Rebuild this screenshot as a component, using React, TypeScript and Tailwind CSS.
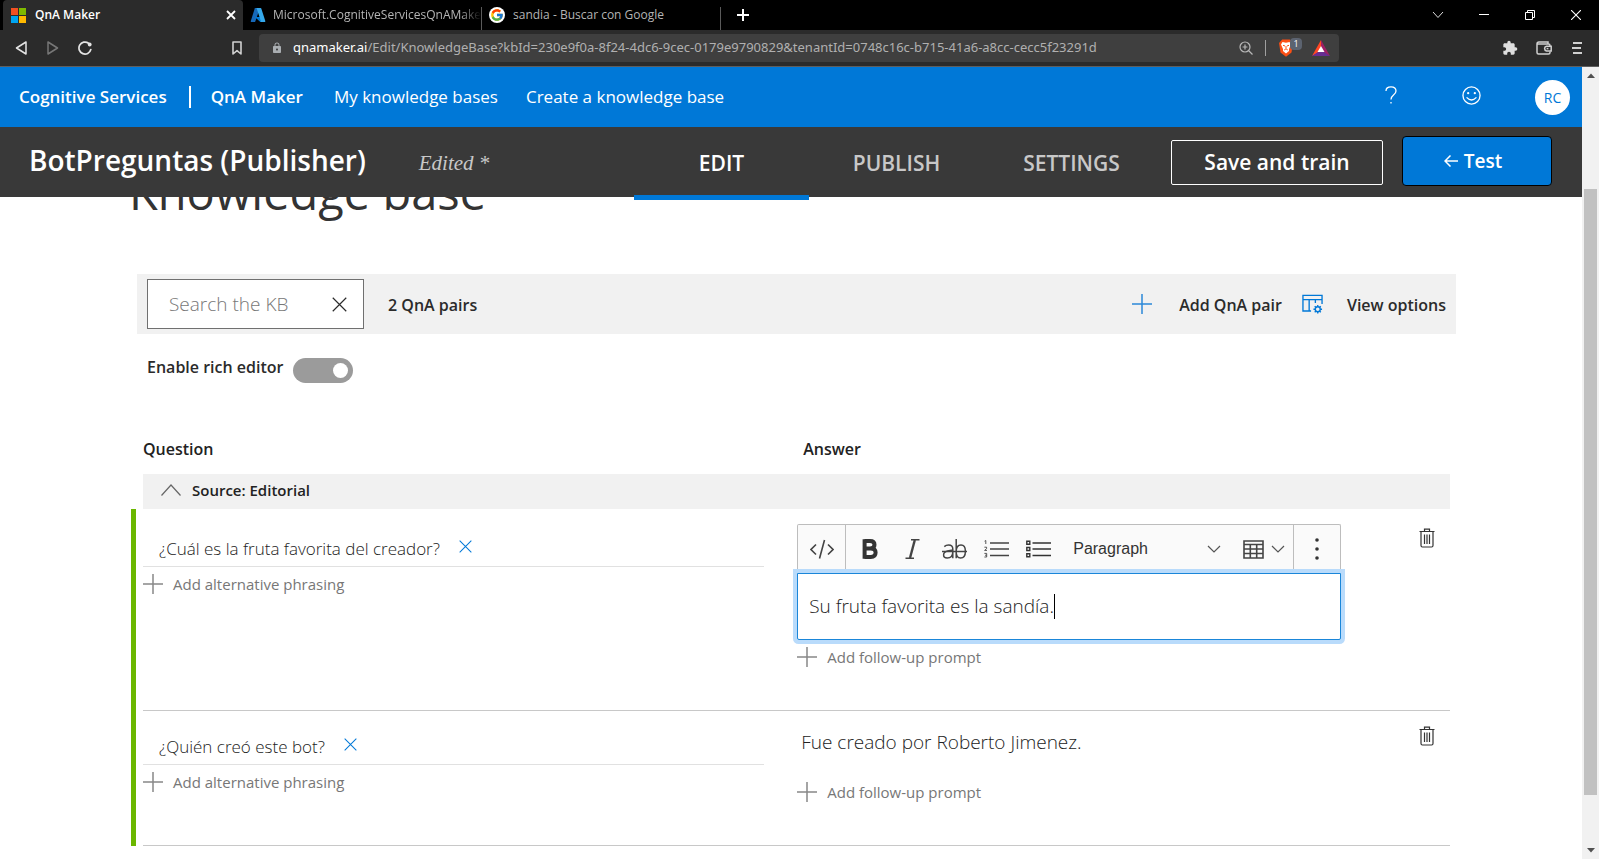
import React from "react";
import { FcGoogle } from "react-icons/fc";
import { MdExtension, MdLock } from "react-icons/md";

type IconProps = { className?: string };

function PlusIcon({ className }: IconProps) {
  return (
    <svg viewBox="0 0 20 20" className={className} fill="none" stroke="currentColor" strokeWidth="1.5" aria-hidden="true">
      <path d="M0 10H20M10 0V20" />
    </svg>
  );
}

function CrossIcon({ className }: IconProps) {
  return (
    <svg viewBox="0 0 14 14" className={className} fill="none" stroke="currentColor" strokeWidth="1.1" aria-hidden="true">
      <path d="M0.7 0.7L13.3 13.3M13.3 0.7L0.7 13.3" />
    </svg>
  );
}

function ChevronDown({ className }: IconProps) {
  return (
    <svg viewBox="0 0 14 8" className={className} fill="none" stroke="currentColor" strokeWidth="1.2" aria-hidden="true">
      <path d="M1 1L7 7L13 1" />
    </svg>
  );
}

function TrashIcon() {
  return (
    <svg viewBox="0 0 16 20" className="h-5 w-4" fill="none" stroke="#333" strokeWidth="1.2" aria-hidden="true">
      <path d="M0.5 3.5H15.5M5.5 3.2V1.2H10.5V3.2M2 3.5V17.5Q2 19 3.4 19H12.6Q14 19 14 17.5V3.5M5.5 6.5V16M8 6.5V16M10.5 6.5V16" />
    </svg>
  );
}

function MicrosoftLogo() {
  return (
    <svg viewBox="0 0 15 15" className="size-[15px] shrink-0" aria-hidden="true">
      <rect width="7" height="7" fill="#f25022" />
      <rect x="8" width="7" height="7" fill="#7fba00" />
      <rect y="8" width="7" height="7" fill="#00a4ef" />
      <rect x="8" y="8" width="7" height="7" fill="#ffb900" />
    </svg>
  );
}

function AzureLogo() {
  return (
    <svg viewBox="0 0 16 16" className="size-4 shrink-0" aria-hidden="true">
      <path d="M5.3 1H10L5.2 14.8Q5 15 4.6 15H1.2Q0.6 14.8 0.8 14.1L4.7 1.5Q4.9 1 5.3 1Z" fill="#1668b8" />
      <path d="M4.8 10H11.2L12 15H10.4Z" fill="#0078d4" />
      <path d="M6 1H10.6Q11.1 1 11.3 1.5L15.3 14.1Q15.5 14.9 14.8 15H10.3Q11 14.7 10.8 14L6.7 1.5Q6.5 1.1 6 1Z" fill="#35a8ea" />
    </svg>
  );
}

function TabStrip() {
  return (
    <div className="flex h-[30px] bg-black pl-[3px] text-[12px] text-[#b4b4b4]">
      <div className="flex w-60 items-center rounded-t bg-[#2b2b2b] pr-[7px] pl-2 text-white">
        <MicrosoftLogo />
        <span className="ml-[9px] flex-1 font-semibold">QnA Maker</span>
        <button aria-label="Close tab">
          <svg viewBox="0 0 10 10" className="size-[10px]" fill="none" stroke="#fff" strokeWidth="1.8" aria-hidden="true">
            <path d="M1 1L9 9M9 1L1 9" />
          </svg>
        </button>
      </div>
      <div className="flex w-[239px] items-center pl-[7px]">
        <AzureLogo />
        <span className="ml-[7px] flex-1 overflow-hidden whitespace-nowrap [mask-image:linear-gradient(to_right,#000_90%,transparent)]">
          Microsoft.CognitiveServicesQnAMaker
        </span>
        <span className="mt-[7px] h-[23px] w-px bg-[#5a5a5a]" />
      </div>
      <div className="flex w-[239px] items-center pl-[7px]">
        <span className="flex size-4 shrink-0 items-center justify-center rounded-full bg-white">
          <FcGoogle className="size-[14px]" />
        </span>
        <span className="ml-2 flex-1 whitespace-nowrap">sandia - Buscar con Google</span>
        <span className="mt-[7px] h-[23px] w-px bg-[#5a5a5a]" />
      </div>
      <button aria-label="New tab" className="ml-4">
        <svg viewBox="0 0 12 12" className="size-3" stroke="#fff" strokeWidth="2" aria-hidden="true">
          <path d="M0 6H12M6 0V12" />
        </svg>
      </button>
      <div className="ml-auto flex text-white">
        <button aria-label="Search tabs" className="flex w-[46px] items-center justify-center">
          <svg viewBox="0 0 12 8" className="h-2 w-3" fill="none" stroke="#ddd" aria-hidden="true">
            <path d="M1 1L6 6.5L11 1" />
          </svg>
        </button>
        <button aria-label="Minimize" className="flex w-[46px] items-center justify-center">
          <svg viewBox="0 0 10 10" className="size-[10px]" stroke="#fff" aria-hidden="true">
            <path d="M0 4.5H10" />
          </svg>
        </button>
        <button aria-label="Restore" className="flex w-[46px] items-center justify-center">
          <svg viewBox="0 0 10 10" className="size-[10px]" fill="none" stroke="#fff" aria-hidden="true">
            <path d="M0.5 2.5H7.5V9.5H0.5ZM2.5 2.5V0.5H9.5V7.5H7.5" />
          </svg>
        </button>
        <button aria-label="Close window" className="flex w-[46px] items-center justify-center">
          <svg viewBox="0 0 10 10" className="size-[10px]" stroke="#fff" strokeWidth="1.1" aria-hidden="true">
            <path d="M0 0L10 10M10 0L0 10" />
          </svg>
        </button>
      </div>
    </div>
  );
}

function AddressBar() {
  return (
    <div className="flex h-[37px] items-center border-b border-[#5e5e5e] bg-[#2b2b2b] pl-[15px] text-[13px]">
      <button aria-label="Back" className="mr-5">
        <svg viewBox="0 0 12 14" className="h-[14px] w-3" fill="none" stroke="#e4e4e4" strokeWidth="1.5" strokeLinejoin="round" aria-hidden="true">
          <path d="M11 1V13L1.5 7Z" />
        </svg>
      </button>
      <button aria-label="Forward" className="mr-[19px]">
        <svg viewBox="0 0 12 14" className="h-[14px] w-3" fill="none" stroke="#777" strokeWidth="1.5" strokeLinejoin="round" aria-hidden="true">
          <path d="M1 1V13L10.5 7Z" />
        </svg>
      </button>
      <button aria-label="Reload">
        <svg viewBox="0 0 14 14" className="size-[14px]" fill="none" stroke="#e4e4e4" strokeWidth="1.7" strokeLinecap="round" aria-hidden="true">
          <path d="M12.8 8.5A6 6 0 1 1 10.5 2.2" />
          <circle cx="11.7" cy="3.5" r="1.9" fill="#e4e4e4" stroke="none" />
        </svg>
      </button>
      <button aria-label="Bookmark this page" className="mr-[17px] ml-[140px]">
        <svg viewBox="0 0 10 14" className="h-[14px] w-[10px]" fill="none" stroke="#d0d0d0" strokeWidth="1.6" strokeLinejoin="round" aria-hidden="true">
          <path d="M1 1H9V13L5 9.6L1 13Z" />
        </svg>
      </button>
      <div className="mr-[163px] flex h-7 min-w-0 flex-1 items-center rounded bg-[#3f3f3f] pr-[9px] pl-3">
        <MdLock className="size-3 shrink-0 text-[#aaaeb2]" />
        <div role="textbox" aria-label="Address" className="ml-[10px] flex-1 overflow-hidden font-['Noto_Sans',sans-serif] whitespace-nowrap text-[#b0b0b0]">
          <span className="text-white">qnamaker.ai</span>
          /Edit/KnowledgeBase?kbId=230e9f0a-8f24-4dc6-9cec-0179e9790829&amp;tenantId=0748c16c-b715-41a6-a8cc-cecc5f23291d
        </div>
        <button aria-label="Zoom">
          <svg viewBox="0 0 14 14" className="size-[14px]" fill="none" stroke="#b8b8b8" strokeWidth="1.2" aria-hidden="true">
            <path d="M9.5 9.5L13.5 13.5M6 3.6V8.4M3.6 6H8.4" />
            <circle cx="6" cy="6" r="5" />
          </svg>
        </button>
        <span className="mx-3 h-4 w-px bg-[#a0a0a0]" />
        <button aria-label="Brave Shields" className="relative mr-[18px] w-4">
          <svg viewBox="0 0 16 18" className="h-[18px] w-4" aria-hidden="true">
            <path d="M4.2 0.5H11.8L15 4L13.5 13.5L8 17.8L2.5 13.5L1 4Z" fill="#fb4f14" />
            <path d="M4.5 3L8 3.8L11.5 3L13 5.5L11 10L11 12L8 14.5L5 12L5 10L3 5.5Z" fill="#fff" />
            <path d="M5 6.3L7 7M11 6.3L9 7M8 7V9.5M6.2 11L8 9.8L9.8 11" fill="none" stroke="#fb4f14" />
          </svg>
          <span className="absolute -top-px left-3 flex size-3 items-center justify-center rounded bg-[#5c6370] text-[9px] text-white">1</span>
        </button>
        <button aria-label="Brave Rewards">
          <svg viewBox="0 0 18 16" className="h-4 w-[18px]" aria-hidden="true">
            <path d="M9 0L0 16L9 11Z" fill="#ff4724" />
            <path d="M9 0L18 16L9 11Z" fill="#9e1f63" />
            <path d="M0 16H18L9 10Z" fill="#662d91" />
            <path d="M9 6L5.5 12H12.5Z" fill="#fff" />
          </svg>
        </button>
      </div>
      <button aria-label="Extensions" className="mr-[18px]">
        <MdExtension className="size-4 text-[#dedede]" />
      </button>
      <button aria-label="Wallet" className="mr-5">
        <svg viewBox="0 0 16 14" className="h-[14px] w-4" fill="none" stroke="#d0d0d0" strokeWidth="1.5" aria-hidden="true">
          <path d="M1 3V11.5Q1 13 2.5 13H12.5Q14 13 14 11.5V10.5M14 5V4.5Q14 3 12.5 3H1M1 3Q1 1 3 1H12V3" />
          <path d="M15.2 5.2H10.5Q8.6 5.6 8.6 7.6Q8.6 9.6 10.5 10H15.2Z" />
          <path d="M10.6 7.6H12.4" />
        </svg>
      </button>
      <button aria-label="Menu" className="mr-[17px]">
        <svg viewBox="0 0 10 12" className="h-3 w-[10px]" stroke="#d0d0d0" strokeWidth="1.8" aria-hidden="true">
          <path d="M1 1H10M0 6H9M1 11H10" />
        </svg>
      </button>
    </div>
  );
}

function ServiceHeader() {
  return (
    <header className="flex h-[60px] items-center bg-[#0078d7] pr-3 pl-[19px] text-[17px] text-white">
      <a href="#services" className="font-semibold">Cognitive Services</a>
      <span className="mr-5 ml-[22px] h-[22px] w-[2px] bg-white" />
      <a href="#qna" className="font-semibold">QnA Maker</a>
      <a href="#bases" className="ml-[31px]">My knowledge bases</a>
      <a href="#create" className="ml-7">Create a knowledge base</a>
      <div className="ml-auto flex items-center">
        <button aria-label="Help" className="mb-1">
          <svg viewBox="0 0 12 18" className="h-[18px] w-3" fill="none" stroke="#fff" strokeWidth="1.3" aria-hidden="true">
            <path d="M1 5Q1 0.8 6 0.8Q11 0.8 11 5Q11 7 8.5 9Q6 11 6 13.4" />
            <path d="M6 16V17.6" />
          </svg>
        </button>
        <button aria-label="Feedback" className="mr-[54px] mb-1 ml-[65px]">
          <svg viewBox="0 0 20 20" className="size-[19px]" fill="none" stroke="#fff" strokeWidth="1.4" aria-hidden="true">
            <circle cx="10" cy="10" r="9" />
            <path d="M4.8 12Q10 17.5 15.2 12" />
            <circle cx="6.5" cy="7.5" r="1.2" fill="#fff" stroke="none" />
            <circle cx="13.5" cy="7.5" r="1.2" fill="#fff" stroke="none" />
          </svg>
        </button>
        <button className="flex size-[35px] items-center justify-center rounded-full bg-white text-[14px] text-[#0078d7]">RC</button>
      </div>
    </header>
  );
}

function BotBar() {
  return (
    <div className="relative z-10 flex h-[70px] items-center bg-[#393939] pr-[30px] pl-[29px] text-white">
      <h2 className="mb-1 text-[28px] font-semibold">BotPreguntas (Publisher)</h2>
      <span className="ml-[53px] pt-1 font-['Liberation_Serif',serif] text-[21px] text-[#c8c8c8] italic">Edited *</span>
      <nav className="ml-auto flex self-stretch text-[21px] font-semibold text-[#c8c8c8]">
        <a href="#edit" className="relative flex w-[175px] items-center justify-center pt-1 text-white">
          EDIT
          <span className="absolute inset-x-0 -bottom-[3px] h-[5px] bg-[#0078d7]" />
        </a>
        <a href="#publish" className="flex w-[175px] items-center justify-center pt-1">PUBLISH</a>
        <a href="#settings" className="flex w-[175px] items-center justify-center pt-1">SETTINGS</a>
      </nav>
      <button className="ml-3 h-[45px] w-[212px] rounded-xs border border-white pt-[2px] text-[21px] font-semibold">Save and train</button>
      <button className="mb-[2px] ml-[19px] flex h-[50px] w-[150px] items-center justify-center gap-[6px] rounded border border-black bg-[#0078d7] pr-2 text-[19px] font-semibold">
        <svg viewBox="0 0 14 12" className="h-3 w-[14px]" fill="none" stroke="#fff" strokeWidth="1.5" aria-hidden="true">
          <path d="M14 6H1M6.5 0.5L1 6L6.5 11.5" />
        </svg>
        Test
      </button>
    </div>
  );
}

function CommandBar() {
  return (
    <div className="mr-[126px] ml-[137px] flex h-[60px] items-center bg-[#f1f1f1] px-[10px] text-[16px] font-semibold text-[#2b2b2b]">
      <div className="flex h-[50px] w-[217px] items-center border border-[#707070] bg-white pr-4 pl-[21px]">
        <input
          aria-label="Search the KB"
          placeholder="Search the KB"
          className="w-full min-w-0 text-[19px] font-light outline-none placeholder:text-[#777]"
        />
        <button aria-label="Clear search">
          <CrossIcon className="size-[15px]" />
        </button>
      </div>
      <span className="ml-6 pt-[2px]">2 QnA pairs</span>
      <button className="ml-auto flex items-center">
        <PlusIcon className="mr-[27px] size-5 text-[#2b88d8]" />
        <span className="pt-[2px]">Add QnA pair</span>
      </button>
      <button className="ml-5 flex items-center">
        <svg viewBox="0 0 22 20" className="mr-6 h-5 w-[21px]" fill="none" stroke="#0078d7" strokeWidth="1.4" aria-hidden="true">
          <path d="M9.5 17.3H1V1H21V10M1 5.5H21M7.5 5.5V17.3M14 5.5V9" />
          <circle cx="16.5" cy="15.5" r="2.6" />
          <path d="M16.5 11V12.9M16.5 18.1V20M12 15.5H13.9M19.1 15.5H21M13.3 12.3L14.7 13.7M18.3 17.3L19.7 18.7M19.7 12.3L18.3 13.7M14.7 17.3L13.3 18.7" />
        </svg>
        <span className="pt-[2px]">View options</span>
      </button>
    </div>
  );
}

function QuestionCell({ text }: { text: string }) {
  return (
    <>
      <div className="mr-[33px] flex h-[54px] items-end border-b border-[#e1e1e1] pb-[7px] pl-4">
        <input aria-label="Question" defaultValue={text} className="field-sizing-content text-[17px] leading-5 font-light text-[#222] outline-none" />
        <button aria-label="Remove question" className="mb-[6px] ml-[19px]">
          <CrossIcon className="size-[13px] text-[#0078d7]" />
        </button>
      </div>
      <button className="mt-[7px] flex h-5 items-center gap-[10px] text-[15px] text-[#777]">
        <PlusIcon className="size-5 text-[#888]" />
        Add alternative phrasing
      </button>
    </>
  );
}

function FollowUpButton() {
  return (
    <button className="flex h-5 items-center gap-[10px] text-[15px] text-[#777]">
      <PlusIcon className="size-5 text-[#888]" />
      Add follow-up prompt
    </button>
  );
}

function RichEditor() {
  return (
    <div className="mt-[11px] mb-[7px]">
      <div className="flex h-[49px] rounded-t-xs border border-b-0 border-[#bdbdbd] bg-[#fafafa] text-[#333]">
        <button aria-label="Source" className="flex w-12 items-center justify-center border-r border-[#bdbdbd]">
          <svg viewBox="0 0 24 20" className="h-5 w-6" fill="none" stroke="#444" strokeWidth="1.6" aria-hidden="true">
            <path d="M6 5.5L1 10.5L6 15.5M18 5.5L23 10.5L18 15.5M14.5 1L9.5 19.5" />
          </svg>
        </button>
        <button aria-label="Bold" className="ml-4 flex items-center">
          <svg viewBox="0 0 16 20" className="h-5 w-4" fill="none" stroke="#333" strokeWidth="4" aria-hidden="true">
            <path d="M2.5 2H8Q12.5 2 12.5 5.7Q12.5 9.4 8 9.4H2.5M2.5 9.4H8.8Q13.6 9.4 13.6 13.6Q13.6 18 8.8 18H2.5M2.6 0.3V19.7" />
          </svg>
        </button>
        <button aria-label="Italic" className="ml-[27px] flex items-center">
          <svg viewBox="0 0 15 20" className="h-5 w-[15px]" fill="none" stroke="#444" aria-hidden="true">
            <path d="M9.8 1L5 19" strokeWidth="2.4" />
            <path d="M6 0.8H14.5M0.5 19.2H9" strokeWidth="1.4" />
          </svg>
        </button>
        <button aria-label="Strikethrough" className="ml-[22px] flex items-center">
          <svg viewBox="0 0 25 20" className="h-5 w-[25px]" fill="none" stroke="#444" strokeWidth="1.5" aria-hidden="true">
            <path d="M0 12.5H25" />
            <path d="M2.3 7.6Q4 6 6.6 6Q10.8 6 10.8 10V19.2M10.8 11L5.5 12Q1.6 12.8 1.6 16Q1.6 19 5.2 19Q10.8 19 10.8 13" />
            <path d="M14.2 0V19.2M14.2 12.6Q14.2 6 19 6Q23.4 6 23.4 12.2Q23.4 19 18.6 19Q14.2 19 14.2 13" />
          </svg>
        </button>
        <button aria-label="Numbered list" className="ml-[17px] flex items-center">
          <svg viewBox="0 0 25 18" className="h-[18px] w-[25px]" fill="none" stroke="#444" aria-hidden="true">
            <path d="M6 3H25M6 9H25M6 15.5H25" strokeWidth="1.6" />
            <path d="M0.6 1.2L1.8 0.5V4M0.4 7.2H2.6V8.6L0.6 10.4H3M0.4 13.4H2.7V17H0.4M1 15.2H2.6" strokeWidth="0.9" />
          </svg>
        </button>
        <button aria-label="Bulleted list" className="ml-[17px] flex items-center">
          <svg viewBox="0 0 25 18" className="h-[18px] w-[25px]" fill="none" stroke="#333" aria-hidden="true">
            <path d="M6.5 3H25M6.5 9H25M6.5 15.5H25" strokeWidth="1.6" />
            <path d="M0.8 1.3H3.8V4.3H0.8ZM0.8 7.5H3.8V10.5H0.8ZM0.8 13.8H3.8V16.8H0.8Z" strokeWidth="1.4" />
          </svg>
        </button>
        <div className="relative ml-[22px] flex min-w-0 flex-1 items-center">
          <select aria-label="Block style" className="w-full appearance-none bg-transparent font-['Liberation_Sans',sans-serif] text-[16px] outline-none">
            <option>Paragraph</option>
            <option>Heading 1</option>
          </select>
          <ChevronDown className="pointer-events-none absolute right-0 h-2 w-[14px] text-[#555]" />
        </div>
        <button aria-label="Insert table" className="mr-2 ml-[22px] flex items-center gap-[7px]">
          <svg viewBox="0 0 21 19" className="h-[19px] w-[21px]" fill="none" stroke="#444" strokeWidth="1.6" aria-hidden="true">
            <path d="M1 1H20V18H1ZM1 4.5H20M1 9H20M1 13.5H20M7.3 4.5V18M13.7 4.5V18" />
          </svg>
          <ChevronDown className="h-2 w-[14px] text-[#555]" />
        </button>
        <button aria-label="More" className="flex w-[47px] items-center justify-center border-l border-[#bdbdbd]">
          <svg viewBox="0 0 4 24" className="h-6 w-1" fill="#333" aria-hidden="true">
            <circle cx="2" cy="3" r="1.8" />
            <circle cx="2" cy="12" r="1.8" />
            <circle cx="2" cy="21" r="1.8" />
          </svg>
        </button>
      </div>
      <div className="relative flex h-[67px] items-center rounded-b-xs border border-[#1a86d9] bg-white pl-[11px] ring-4 ring-[#b9dbfb]">
        <input aria-label="Answer" defaultValue="Su fruta favorita es la sandía." className="field-sizing-content text-[19px] font-light text-[#222] outline-none" />
        <span className="h-[25px] w-px bg-black" />
      </div>
    </div>
  );
}

function DeleteButton() {
  return (
    <button aria-label="Delete pair" className="mt-[15px]">
      <TrashIcon />
    </button>
  );
}

function PairsTable() {
  return (
    <div className="mt-[54px] mr-[132px] ml-[131px]">
      <table className="w-full table-fixed border-separate border-spacing-0 text-left text-[#222]">
        <colgroup>
          <col className="w-3" />
          <col className="w-[49.6%]" />
          <col />
          <col className="w-[109px]" />
        </colgroup>
        <thead className="text-[16px]">
          <tr className="h-[37px] align-top leading-6">
            <td />
            <th scope="col" className="font-semibold">Question</th>
            <th scope="col" className="pl-[6px] font-semibold">Answer</th>
            <td />
          </tr>
        </thead>
        <tbody>
          <tr className="h-[35px]">
            <td />
            <th scope="rowgroup" colSpan={3} className="bg-[#f1f1f1] pb-[3px] pl-[18px] text-[15px] leading-5 font-semibold">
              <button className="flex items-center gap-[11px]">
                <svg viewBox="0 0 20 12" className="h-3 w-5" fill="none" stroke="#666" strokeWidth="1.2" aria-hidden="true">
                  <path d="M0.5 11.5L10 1L19.5 11.5" />
                </svg>
                Source: Editorial
              </button>
            </th>
          </tr>
          <tr className="h-[202px]">
            <td className="border-l-[5px] border-[#6bb700]" />
            <td className="border-b border-[#c8c8c8] pt-1 align-top">
              <QuestionCell text="¿Cuál es la fruta favorita del creador?" />
            </td>
            <td className="border-b border-[#c8c8c8] pt-1 align-top">
              <RichEditor />
              <FollowUpButton />
            </td>
            <td className="border-b border-[#c8c8c8] pt-1 pr-[15px] text-right align-top">
              <DeleteButton />
            </td>
          </tr>
          <tr className="h-[135px]">
            <td className="border-l-[5px] border-[#6bb700]" />
            <td className="border-b border-[#c8c8c8] align-top">
              <QuestionCell text="¿Quién creó este bot?" />
            </td>
            <td className="border-b border-[#c8c8c8] align-top">
              <p className="mt-[17px] mb-[26px] pl-1 text-[19px] leading-7 font-light">Fue creado por Roberto Jimenez.</p>
              <FollowUpButton />
            </td>
            <td className="border-b border-[#c8c8c8] pr-[15px] text-right align-top">
              <DeleteButton />
            </td>
          </tr>
        </tbody>
      </table>
    </div>
  );
}

function ScrollRail() {
  return (
    <div className="flex w-[17px] shrink-0 flex-col items-center bg-[#f1f1f1] py-[6px]" aria-hidden="true">
      <svg viewBox="0 0 8 5" className="h-[5px] w-2 shrink-0" fill="#505050">
        <path d="M0 5L4 0.5L8 5Z" />
      </svg>
      <div className="mt-[111px] mb-[53px] w-[13px] flex-1 bg-[#c1c1c1]" />
      <svg viewBox="0 0 8 5" className="h-[5px] w-2 shrink-0" fill="#505050">
        <path d="M0 0L4 4.5L8 0Z" />
      </svg>
    </div>
  );
}

export default function App() {
  return (
    <div className="flex h-screen flex-col overflow-hidden bg-white font-['Open_Sans',sans-serif]">
      <TabStrip />
      <AddressBar />
      <div className="flex min-h-0 flex-1">
        <div className="flex min-w-0 flex-1 flex-col">
          <ServiceHeader />
          <BotBar />
          <main className="min-h-0 flex-1 overflow-hidden">
            <h1 className="-mt-[37px] mb-[50px] ml-[129px] text-[47px] leading-[64px] text-[#333]">Knowledge base</h1>
            <CommandBar />
            <div className="mt-6 ml-[147px] flex items-start gap-[10px] text-[16px] font-semibold text-[#2b2b2b]">
              <label htmlFor="rich" className="-mt-[5px] leading-7">Enable rich editor</label>
              <input
                id="rich"
                type="checkbox"
                role="switch"
                defaultChecked
                className="h-[25px] w-[60px] appearance-none rounded-full bg-[#9b9b9b] p-[5px] before:ml-auto before:block before:size-[15px] before:rounded-full before:bg-white"
              />
            </div>
            <PairsTable />
          </main>
        </div>
        <ScrollRail />
      </div>
    </div>
  );
}
